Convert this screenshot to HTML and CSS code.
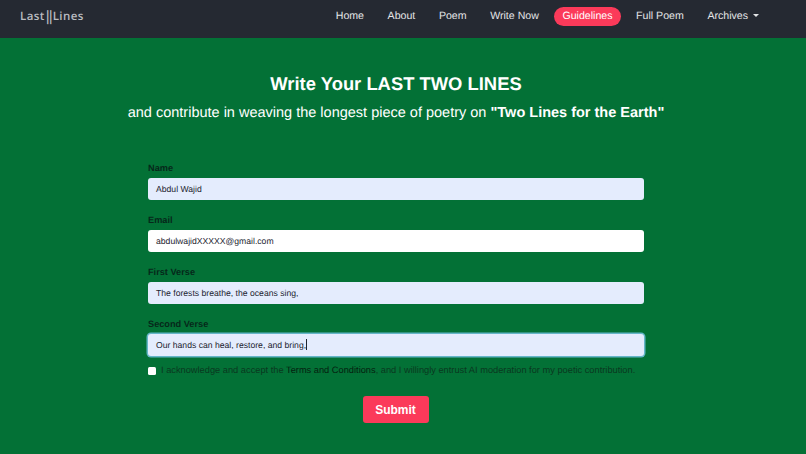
FILE: index.html
```html
<!DOCTYPE html>
<html lang="en">
<head>
<meta charset="utf-8">
<title>Last Lines</title>
<link rel="stylesheet" href="styles.css">
</head>
<body>
<nav class="navbar">
  <a class="brand" href="#">Last<span class="bars">||</span>Lines</a>
  <ul class="nav">
    <li><a href="#">Home</a></li>
    <li><a href="#">About</a></li>
    <li><a href="#">Poem</a></li>
    <li><a href="#">Write Now</a></li>
    <li><a class="active" href="#">Guidelines</a></li>
    <li><a href="#">Full Poem</a></li>
    <li><a class="dropdown" href="#">Archives<span class="caret"></span></a></li>
  </ul>
</nav>
<main class="page">
  <h1 class="title">Write Your LAST TWO LINES</h1>
  <p class="subtitle">and contribute in weaving the longest piece of poetry on <strong>"Two Lines for the Earth"</strong></p>
  <form class="form">
    <div class="field">
      <label class="label">Name</label>
      <div class="input filled">Abdul Wajid</div>
    </div>
    <div class="field">
      <label class="label">Email</label>
      <div class="input">abdulwajidXXXXX@gmail.com</div>
    </div>
    <div class="field">
      <label class="label">First Verse</label>
      <div class="input filled">The forests breathe, the oceans sing,</div>
    </div>
    <div class="field">
      <label class="label">Second Verse</label>
      <div class="input filled focused">Our hands can heal, restore, and bring,<span class="cursor"></span></div>
    </div>
    <div class="check">
      <span class="box"></span>
      <span class="consent">I acknowledge and accept the <a href="#">Terms and Conditions</a>, and I willingly entrust AI moderation for my poetic contribution.</span>
    </div>
    <div class="actions"><button class="submit" type="button">Submit</button></div>
  </form>
</main>
</body>
</html>
```
FILE: styles.css
```css
* { box-sizing: border-box; }
html, body { margin: 0; height: 100%; }
body {
  font-family: "Liberation Sans", Arial, sans-serif;
  background: #037136;
  overflow: hidden;
  text-rendering: geometricPrecision;
}
.navbar {
  height: 38px;
  background: #252932;
  display: flex;
  align-items: center;
  justify-content: space-between;
  padding: 0 39px 5px 20px;
}
.brand {
  display: flex;
  align-items: center;
  font-family: "Open Sans", sans-serif;
  font-size: 11.5px;
  font-weight: 600;
  letter-spacing: 0.4px;
  line-height: 16px;
  color: #b9bbc0;
  text-decoration: none;
}
.bars {
  font-family: "Liberation Sans", sans-serif;
  font-size: 15px;
  font-weight: 400;
  letter-spacing: -0.9px;
  margin: 0 1px;
}
.nav {
  list-style: none;
  display: flex;
  align-items: center;
  margin: 0;
  padding: 0;
}
.nav a {
  display: block;
  font-size: 10.6px;
  line-height: 19px;
  padding: 0 8px;
  color: #e4e5e7;
  text-decoration: none;
  white-space: nowrap;
}
.nav li + li { margin-left: 7.6px; }
.nav a.active {
  background: #fb3a5a;
  color: #fff;
  border-radius: 10px;
}
.caret {
  display: inline-block;
  margin-left: 5px;
  vertical-align: 2px;
  border-top: 3px solid #e4e5e7;
  border-left: 3px solid transparent;
  border-right: 3px solid transparent;
}
.page {
  padding: 35px 162px 0 148px;
}
.title {
  margin: 0 -100px;
  text-align: center;
  font-size: 18.4px;
  line-height: 22px;
  font-weight: 700;
  color: #fff;
}
.subtitle {
  margin: 9px -100px 0;
  text-align: center;
  font-size: 14.5px;
  line-height: 18px;
  color: #fff;
}
.form { margin-top: 41px; width: 496px; }
.field { margin-bottom: 15px; }
.label {
  display: block;
  font-size: 9.2px;
  line-height: 11px;
  font-weight: 700;
  color: #06281a;
  margin-bottom: 4px;
}
.input {
  height: 22px;
  background: #fff;
  border-radius: 3px;
  padding: 0 8px;
  font-size: 8.65px;
  line-height: 22px;
  color: #1d2430;
}
.input.filled { background: #e4ecfd; }
.input.focused { box-shadow: 0 0 0 1.5px #65b6c9; }
.cursor {
  display: inline-block;
  width: 1px;
  height: 11px;
  vertical-align: -2px;
  background: #1d2430;
}
.check {
  display: flex;
  align-items: center;
  gap: 5px;
  margin-top: -6px;
}
.box {
  width: 8px;
  height: 8px;
  background: #fff;
  border-radius: 1.5px;
  flex: none;
}
.consent {
  font-size: 9.28px;
  line-height: 11px;
  color: #0a3820;
  white-space: nowrap;
}
.consent a { color: #05200f; text-decoration: none; }
.actions {
  display: flex;
  justify-content: center;
  margin-top: 20px;
  padding-right: 1px;
}
.submit {
  width: 66px;
  height: 27px;
  border: 0;
  border-radius: 3px;
  background: #fb3a5a;
  color: #fff;
  font-family: inherit;
  font-size: 12px;
  font-weight: 700;
  padding: 0;
}
```
